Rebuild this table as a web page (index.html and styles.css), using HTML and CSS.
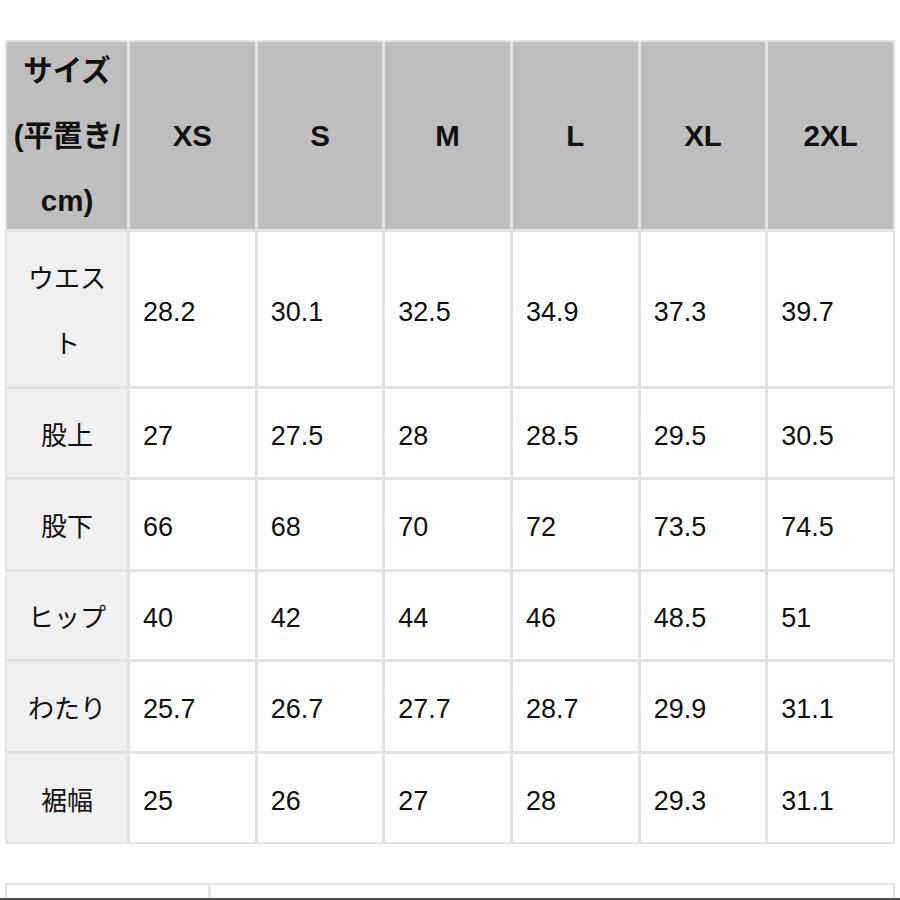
FILE: index.html
```html
<!DOCTYPE html>
<html lang="ja">
<head>
<meta charset="utf-8">
<title>サイズ表</title>
<link rel="stylesheet" href="styles.css">
</head>
<body>
<div class="page">
  <div class="size-table">
    <div class="cell head first">サイズ<br>(平置き/<br>cm)</div>
    <div class="cell head">XS</div>
    <div class="cell head">S</div>
    <div class="cell head">M</div>
    <div class="cell head">L</div>
    <div class="cell head">XL</div>
    <div class="cell head">2XL</div>

    <div class="cell label">ウエス<br>ト</div>
    <div class="cell val">28.2</div>
    <div class="cell val">30.1</div>
    <div class="cell val">32.5</div>
    <div class="cell val">34.9</div>
    <div class="cell val">37.3</div>
    <div class="cell val">39.7</div>

    <div class="cell label">股上</div>
    <div class="cell val">27</div>
    <div class="cell val">27.5</div>
    <div class="cell val">28</div>
    <div class="cell val">28.5</div>
    <div class="cell val">29.5</div>
    <div class="cell val">30.5</div>

    <div class="cell label">股下</div>
    <div class="cell val">66</div>
    <div class="cell val">68</div>
    <div class="cell val">70</div>
    <div class="cell val">72</div>
    <div class="cell val">73.5</div>
    <div class="cell val">74.5</div>

    <div class="cell label">ヒップ</div>
    <div class="cell val">40</div>
    <div class="cell val">42</div>
    <div class="cell val">44</div>
    <div class="cell val">46</div>
    <div class="cell val">48.5</div>
    <div class="cell val">51</div>

    <div class="cell label">わたり</div>
    <div class="cell val">25.7</div>
    <div class="cell val">26.7</div>
    <div class="cell val">27.7</div>
    <div class="cell val">28.7</div>
    <div class="cell val">29.9</div>
    <div class="cell val">31.1</div>

    <div class="cell label">裾幅</div>
    <div class="cell val">25</div>
    <div class="cell val">26</div>
    <div class="cell val">27</div>
    <div class="cell val">28</div>
    <div class="cell val">29.3</div>
    <div class="cell val">31.1</div>
  </div>

  <div class="next-table">
    <div class="ncell"></div>
    <div class="ncell"></div>
  </div>
</div>
<div class="bottom-bar"></div>
</body>
</html>
```

FILE: styles.css
```css
html, body {
  margin: 0;
  padding: 0;
  background: #ffffff;
}

body {
  font-family: "Liberation Sans", "Noto Sans CJK JP", Arial, sans-serif;
  color: #111111;
  overflow: hidden;
  height: 900px;
}

.page {
  padding: 40px 0 0 5px;
}

.size-table {
  width: 890px;
  box-sizing: border-box;
  display: grid;
  grid-template-columns: 120px repeat(6, 1fr);
  grid-template-rows: 187px 154px 88px 89px 87px 89px 88px;
  gap: 3px;
  padding: 2px;
  background: #e3e3e3;
}

.cell {
  display: flex;
  align-items: center;
  box-sizing: border-box;
  overflow: visible;
}

.head {
  background: #bebebe;
  justify-content: center;
  text-align: center;
  font-weight: bold;
  font-size: 29.5px;
  line-height: 65px;
  white-space: nowrap;
}

.label {
  background: #f0f0f0;
  justify-content: center;
  text-align: center;
  font-size: 26px;
  line-height: 65px;
  padding-top: 6px;
  white-space: nowrap;
}

.val {
  background: #ffffff;
  justify-content: flex-start;
  padding-left: 13px;
  padding-top: 6px;
  font-size: 27px;
  line-height: 65px;
}

.next-table {
  margin-top: 39px;
  width: 890px;
  box-sizing: border-box;
  display: grid;
  grid-template-columns: 201px 1fr;
  gap: 3px;
  padding: 2px 2px 0 2px;
  background: #e3e3e3;
}

.ncell {
  background: #ffffff;
  height: 15px;
}

.bottom-bar {
  position: fixed;
  left: 0;
  right: 0;
  bottom: 0;
  height: 2px;
  background: #4d4d4d;
}
```
